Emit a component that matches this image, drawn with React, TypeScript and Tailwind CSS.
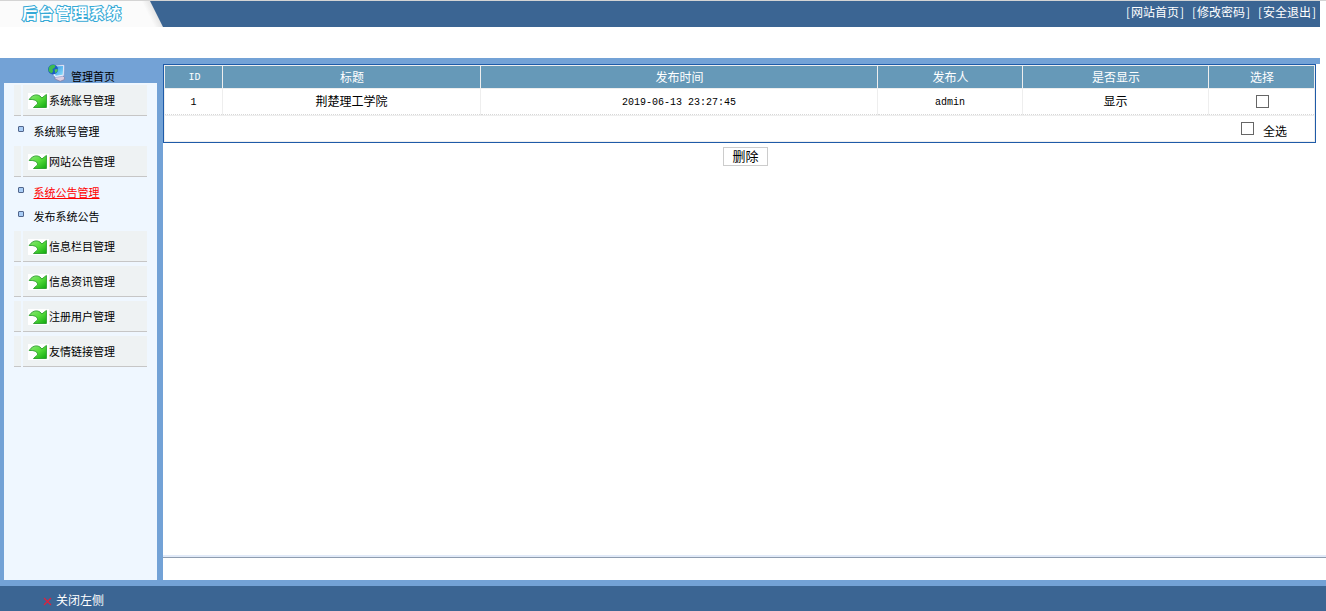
import { Fragment } from "react";

type Group = {
	title: string;
	items: { label: string; active?: boolean }[];
};

const groups: Group[] = [
	{ title: "系统账号管理", items: [{ label: "系统账号管理" }] },
	{
		title: "网站公告管理",
		items: [{ label: "系统公告管理", active: true }, { label: "发布系统公告" }],
	},
	{ title: "信息栏目管理", items: [] },
	{ title: "信息资讯管理", items: [] },
	{ title: "注册用户管理", items: [] },
	{ title: "友情链接管理", items: [] },
];

const columns = ["ID", "标题", "发布时间", "发布人", "是否显示", "选择"];
const rows = [["1", "荆楚理工学院", "2019-06-13 23:27:45", "admin", "显示"]];
const links = ["网站首页", "修改密码", "安全退出"];

function ComputerIcon() {
	return (
		<svg width="18" height="18" viewBox="0 0 18 18" className="shrink-0">
			<defs>
				<linearGradient id="screen" x1="0" y1="0" x2="1" y2="1">
					<stop offset="0" stopColor="#2f8fe4" />
					<stop offset="1" stopColor="#8fe2fb" />
				</linearGradient>
			</defs>
			<path d="M7 12.500l7-1.500 2.500 2.500-.3 2.200-4 1.600L7 15z" fill="#dccfe2" stroke="#857ba0" strokeWidth=".7" />
			<path d="M5 1.500l10.500-.8 1 1-.5 10.300-8.500 1.500L5 11z" fill="#e9effb" stroke="#8195cc" strokeWidth=".6" />
			<path d="M6 2.500l9.200-.4-.5 8.700-7.200 1z" fill="url(#screen)" />
			<circle cx="5" cy="5.500" r="5" fill="#1c5cc4" />
			<path d="M.8 3.500C2.300 1 5 .2 7.500 1.400L6.500 4 4.500 5l.6 2.500L3.500 9.500.5 7z" fill="#3dbb4f" />
			<path d="M6.500 5.500l3-.5.2 1.800-2.200 2.700z" fill="#51c655" />
		</svg>
	);
}

function ArrowIcon() {
	return (
		<svg width="21" height="16" viewBox="0 0 21 16" className="mt-px shrink-0 bg-white">
			<defs>
				<linearGradient id="arrow" x1="0" y1="0" x2="1" y2="1">
					<stop offset="0" stopColor="#8ce878" />
					<stop offset=".5" stopColor="#55dc3a" />
					<stop offset="1" stopColor="#0fa80f" />
				</linearGradient>
			</defs>
			<path
				d="M1.200 6.500C3.500 3 6.500 1.500 9.500 2c1.900.4 3.300 1.500 4.300 3L18.400 1.500v13H5.500l4.100-3.600C9.900 8 6.500 6 1.200 6.500z"
				fill="url(#arrow)"
				stroke="#34a434"
				strokeWidth="1"
				strokeLinejoin="round"
			/>
		</svg>
	);
}

function Header() {
	return (
		<header className="h-[27px] w-full border-t border-[#d4d4d4]">
			<div className="flex h-[26px] w-[1320px] bg-[#3b6593]">
				<div className="relative h-[26px] w-[163px]">
					<svg width="163" height="26" viewBox="0 0 163 26" className="absolute inset-0">
						<defs>
							<linearGradient id="edge" gradientUnits="userSpaceOnUse" x1="149" y1="15" x2="157" y2="11">
								<stop offset="0" stopColor="#fbfbfb" />
								<stop offset="1" stopColor="#e2e2e2" />
							</linearGradient>
						</defs>
						<path d="M0 0h150l13 26H0z" fill="url(#edge)" />
					</svg>
					<h1 className="relative whitespace-nowrap pl-[22px] text-[15px] font-bold leading-[23px] tracking-[1.800px] text-white [-webkit-text-stroke:2px_#35a9d6] [paint-order:stroke_fill]">
						后台管理系统
					</h1>
				</div>
				<nav className="ml-auto flex gap-[6px] pr-[3px] text-xs leading-[21px] text-white">
					{links.map((link) => (
						<a key={link} className="flex w-[60px] justify-center">
							<span className="w-[5px]">[</span>
							<span>{link}</span>
							<span className="w-[5px] text-right">]</span>
						</a>
					))}
				</nav>
			</div>
		</header>
	);
}

function Sidebar() {
	return (
		<aside className="flex w-[163px] shrink-0 flex-col bg-[#73a2d6] pl-1 pr-[6px] text-[11px] text-black">
			<div className="flex h-[25px] shrink-0 items-start pl-[44px] pt-[6px]">
				<ComputerIcon />
				<span className="ml-[5px] mt-1 leading-4">管理首页</span>
			</div>
			<div className="grow bg-[#eff7ff] pl-[10px] pr-[10px] pt-[2px]">
				{groups.map((group) => (
					<Fragment key={group.title}>
						<div className="flex h-[31px] gap-[2px]">
							<div className="w-[7px] border-b border-[#c6c6c6] bg-[#eef2f3]" />
							<div className="flex grow items-center border-b border-[#c6c6c6] bg-[#eef2f3] pl-[5px]">
								<ArrowIcon />
								<span className="whitespace-nowrap pb-px leading-4">{group.title}</span>
							</div>
						</div>
						{group.items.length === 0 ? (
							<div className="h-1" />
						) : (
							<ul className="py-[3px]">
								{group.items.map((item) => (
									<li key={item.label} className="flex h-6 items-center pl-1">
										<span className="mb-1 mr-[9.500px] size-[6px] rounded-[1px] border border-[#52668c] bg-[#a9cdf6]" />
										<a className={item.active ? "text-[#ff0000] underline underline-offset-1" : ""}>{item.label}</a>
									</li>
								))}
							</ul>
						)}
					</Fragment>
				))}
			</div>
		</aside>
	);
}

function Checkbox() {
	return <span className="inline-block size-[13px] border border-[#666666] bg-white" />;
}

function NoticeTable() {
	return (
		<div className="w-[1153px] border border-[#1f5ba8]">
			<div className="grid grid-cols-[57px_257px_396px_144px_185px_105px] grid-rows-[22px_26px_25px] gap-px bg-[#eeeeee] p-px text-xs text-black">
				{columns.map((col) => (
					<div
						key={col}
						className={`flex items-center justify-center bg-[#6699b8] text-white ${
							col === "ID" ? "pl-[2px] pt-[2px] font-[Liberation_Mono] text-[10px]" : "pl-px"
						}`}
					>
						{col}
					</div>
				))}
				{rows.map((row) => (
					<Fragment key={row[0]}>
						{row.map((cell, i) => (
							<div
								key={i}
								className={`flex items-center justify-center border-b border-dotted border-[#d8d8d8] bg-white ${
									/^[\x20-\x7e]+$/.test(cell) ? "pt-[2px] font-[Liberation_Mono] text-[10px]" : "pb-[2px]"
								}`}
							>
								{cell}
							</div>
						))}
						<div className="flex items-center justify-center border-b border-dotted border-[#d8d8d8] bg-white pl-px">
							<Checkbox />
						</div>
					</Fragment>
				))}
				<div className="col-span-6 flex items-start justify-end bg-white pr-[27px] pt-[6px]">
					<Checkbox />
					<span className="ml-[9px] leading-[18px]">全选</span>
				</div>
			</div>
		</div>
	);
}

export default function App() {
	return (
		<div className="flex h-[611px] w-[1326px] flex-col overflow-hidden bg-white font-['Noto_Sans_CJK_SC',sans-serif]">
			<Header />
			<div className="mt-[31px] flex h-[522px] shrink-0">
				<Sidebar />
				<main className="flex grow flex-col">
					<div className="h-[6px] w-[1157px] shrink-0 bg-[#73a2d6]" />
					<NoticeTable />
					<button className="ml-[560px] mt-1 flex h-[19px] w-[45px] items-center justify-center border border-[#cccccc] bg-white pb-[2px] text-[13px] leading-[15px] text-black">
						删除
					</button>
					<div className="mb-[22px] mt-auto h-[3px] border-b border-[#8f9db0] bg-[#e1eaf8]" />
				</main>
			</div>
			<footer className="h-[31px] border-t-[6px] border-[#73a2d6] bg-[#3b6593]">
				<div className="flex h-[25px] items-center pl-[43px] pt-[4px] text-xs text-white">
					<svg width="9" height="9" viewBox="0 0 9 9" className="mr-[4px] mt-px">
						<path d="M1 1l7 7M8 1L1 8" stroke="#e0203c" strokeWidth="1.200" />
					</svg>
					<span className="pb-px">关闭左侧</span>
				</div>
			</footer>
		</div>
	);
}
